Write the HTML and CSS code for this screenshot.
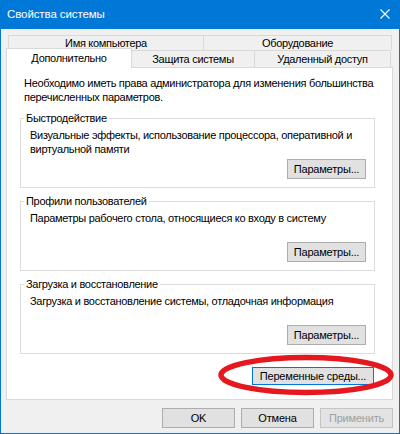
FILE: index.html
```html
<!DOCTYPE html>
<html lang="ru">
<head>
<meta charset="utf-8">
<title>Свойства системы</title>
<link rel="stylesheet" href="styles.css">
</head>
<body>
<div class="window">
  <div class="titlebar">
    <span class="title">Свойства системы</span>
    <svg class="close" width="10" height="10" viewBox="0 0 10 10"><path d="M0.5 0.5 L9.5 9.5 M9.5 0.5 L0.5 9.5" stroke="#fff" stroke-width="1.1" fill="none"/></svg>
  </div>
  <div class="body">
    <div class="tabrow back">
      <div class="tab t-name">Имя компьютера</div>
      <div class="tab t-hw">Оборудование</div>
    </div>
    <div class="tabrow front">
      <div class="tab selected t-adv">Дополнительно</div>
      <div class="tab t-prot">Защита системы</div>
      <div class="tab t-remote">Удаленный доступ</div>
    </div>
    <div class="panel">
      <p class="intro">Необходимо иметь права администратора для изменения большинства перечисленных параметров.</p>
      <div class="group">
        <span class="legend">Быстродействие</span>
        <p class="gtext">Визуальные эффекты, использование процессора, оперативной и виртуальной памяти</p>
        <div class="gbtns"><button class="btn gbtn">Параметры...</button></div>
      </div>
      <div class="group">
        <span class="legend">Профили пользователей</span>
        <p class="gtext">Параметры рабочего стола, относящиеся ко входу в систему</p>
        <div class="gbtns"><button class="btn gbtn">Параметры...</button></div>
      </div>
      <div class="group">
        <span class="legend">Загрузка и восстановление</span>
        <p class="gtext">Загрузка и восстановление системы, отладочная информация</p>
        <div class="gbtns"><button class="btn gbtn">Параметры...</button></div>
      </div>
      <div class="envrow"><button class="btn default envbtn">Переменные среды...</button></div>
    </div>
    <div class="footer">
      <button class="btn fbtn">OK</button>
      <button class="btn fbtn">Отмена</button>
      <button class="btn fbtn disabled">Применить</button>
    </div>
  </div>
  <svg class="ring" width="184" height="46" viewBox="0 0 184 46"><ellipse cx="92" cy="23" rx="85" ry="17.5" fill="none" stroke="#e5171f" stroke-width="5.5"/></svg>
</div>
</body>
</html>
```
FILE: styles.css
```css
* { box-sizing: border-box; }
html, body { margin: 0; padding: 0; background: #f0f0f0; }
body { font-family: "Liberation Sans", Arial, sans-serif; font-size: 11px; letter-spacing: -0.3px; color: #000; }
.window {
  position: relative;
  width: 400px; height: 434px;
  border: 1px solid #0078d7; border-top: none;
  background: #f0f0f0;
  display: flex; flex-direction: column;
}
.titlebar {
  height: 29px; background: #0078d7; color: #fff;
  display: flex; align-items: center; justify-content: space-between;
  padding: 0 10px 1px 7px; margin: 0 -1px;
}
.title { font-size: 11.5px; letter-spacing: -0.1px; }
.body { padding: 6px 6px 0 5px; display: flex; flex-direction: column; }
.tabrow { display: flex; }
.tab {
  border: 1px solid #d9d9d9; border-bottom: none;
  background: #f0f0f0; text-align: center; line-height: 13px;
  margin-left: -1px;
}
.back { margin-left: 3px; height: 15px; }
.back .tab { height: 15px; padding-top: 1px; }
.front { margin-top: -2px; align-items: flex-end; height: 19px; }
.front .tab { height: 17px; padding-top: 2px; }
.front .tab.selected {
  height: 20px; margin-bottom: -1px; background: #fff; padding-top: 3px;
  position: relative; z-index: 1; margin-left: 0;
}
.t-name { width: 196px; }
.t-hw { width: 189px; }
.t-adv { width: 126px; }
.t-prot { width: 124px; }
.t-remote { width: 137px; }
.panel {
  height: 333px; background: #fff; border: 1px solid #d9d9d9;
  padding: 8px 17px 0 17px;
  display: flex; flex-direction: column;
}
.intro { margin: 0; line-height: 14px; width: 352px; }
.group {
  margin: 14px 0 0 -4px; width: 355px; height: 70px;
  border: 1px solid #dcdcdc;
  display: flex; flex-direction: column;
  padding: 0 8px 8px 9px;
}
.group + .group { margin-top: 13px; }
.legend {
  align-self: flex-start; margin: -8px 0 0 -6px; padding: 0 2px;
  background: #fff; line-height: 14px;
}
.gtext { margin: 3px 0 0 0; line-height: 14px; }
.gbtns { margin-top: auto; display: flex; justify-content: flex-end; }
.btn {
  font-family: inherit; font-size: 11px; letter-spacing: -0.2px; color: #000;
  background: #e1e1e1; border: 1px solid #adadad; padding: 0;
  height: 20px; line-height: 18px;
}
.gbtn { width: 79px; }
.envrow { margin: 13px 1px 0 0; display: flex; justify-content: flex-end; }
.envbtn { width: 122px; height: 18px; line-height: 16px; border-color: #0078d7; }
.footer { margin-top: 8px; display: flex; justify-content: flex-end; gap: 6px; }
.fbtn { width: 73px; }
.fbtn.disabled { color: #a0a0a0; background: #e3e3e3; border-color: #c4c4c4; }
.ring { position: absolute; left: 213px; top: 352px; }
```
